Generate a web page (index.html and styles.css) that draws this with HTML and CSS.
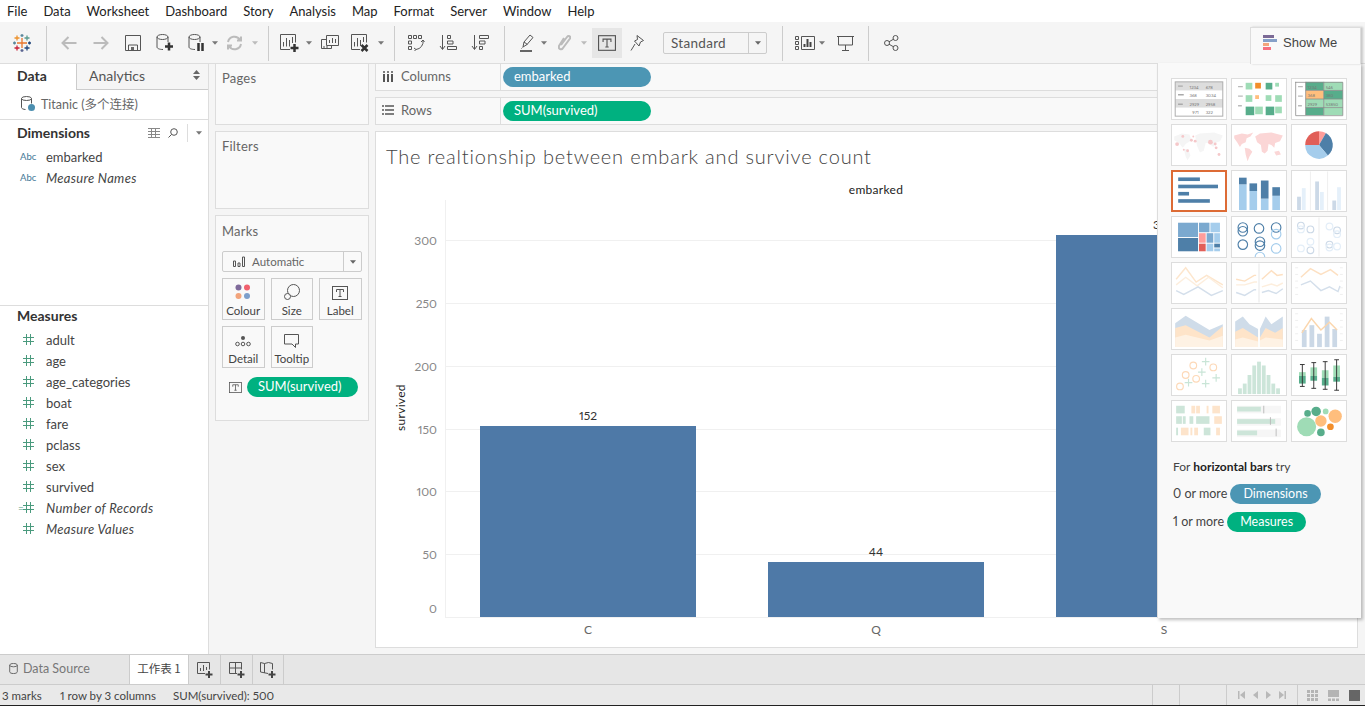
FILE: index.html
```html
<!DOCTYPE html>
<html>
<head>
	<meta charset="utf-8">
	<title>Tableau - Sheet 1</title>
	<link rel="stylesheet" href="styles.css">
</head>
<body>
<svg class="defs" width="0" height="0">
	<symbol id="caret" viewBox="0 0 10 6"><path d="M2 1.200h6L5 4.800z"/></symbol>
	<symbol id="tbox" viewBox="0 0 16 14"><rect x=".5" y=".5" width="15" height="13" fill="none" stroke="#555"/><path d="M4.500 6V3.500h7V6M8 3.500v7M6.500 10.500h3" fill="none" stroke="#555"/></symbol>
	<symbol id="hash" viewBox="0 0 11 11"><path d="M0 3.500h11M0 7.500h11M3.500 0v11M7.500 0v11" fill="none" stroke="#4a9a7d"/></symbol>
</svg>
<div class="app">

	<!-- menu -->
	<div class="menubar">
		<span>File</span><span>Data</span><span>Worksheet</span><span>Dashboard</span><span>Story</span><span>Analysis</span><span>Map</span><span>Format</span><span>Server</span><span>Window</span><span>Help</span>
	</div>

	<!-- toolbar -->
	<div class="toolbar">
		<div class="tb-group g1">
			<div class="btn"><svg width="18" height="18" viewBox="0 0 18 18" fill="none" stroke-width="1.300">
				<path d="M9 4v10M4 9h10" stroke="#e8762d"/><path d="M9 0v3M7.500 1.500h3" stroke="#5b879b"/><path d="M9 15v3M7.500 16.500h3" stroke="#5b6591"/><path d="M0 9h3M1.500 7.500v3" stroke="#59879b"/><path d="M15 9h3M16.500 7.500v3" stroke="#1f447a"/><path d="M4 1.500v5M1.500 4h5" stroke="#eb912b"/><path d="M14 1.500v5M11.500 4h5" stroke="#5a9a8f"/><path d="M4 11.500v5M1.500 14h5" stroke="#c72037"/><path d="M14 11.500v5M11.500 14h5" stroke="#1f457e"/>
			</svg></div>
		</div>
		<div class="tb-group g2">
			<div class="btn"><svg class="dim" width="16" height="14" viewBox="0 0 16 14"><path d="M15.500 7H1.500M7.500 1l-6 6 6 6"/></svg></div>
			<div class="btn"><svg class="dim" width="16" height="14" viewBox="0 0 16 14"><path d="M.5 7h14M8.500 1l6 6-6 6"/></svg></div>
			<div class="btn"><svg class="line" width="16" height="16" viewBox="0 0 16 16"><path d="M.5.5h15v15H.5zM3.500 15.500V10h9v5.500"/><rect x="6" y="12" width="3" height="3" fill="#666" stroke="none"/></svg></div>
			<div class="btn"><svg class="line" width="18" height="18" viewBox="0 0 18 18"><ellipse cx="6.500" cy="3" rx="5.500" ry="2.500"/><path d="M1 3v10c0 1.500 2.500 2.500 6 2.500M12 3v5"/><path class="heavy" d="M13 8.500v8M9 12.500h8"/></svg></div>
			<div class="btn"><svg class="line" width="18" height="18" viewBox="0 0 18 18"><ellipse cx="6.500" cy="3" rx="5.500" ry="2.500"/><path d="M1 3v10c0 1.500 2.500 2.500 6 2.500M12 3v5"/><path class="heavy" d="M10.500 9v8M14.500 9v8"/></svg></div>
			<svg class="caret nudge-3" width="10" height="6"><use href="#caret"/></svg>
			<div class="btn nudge-2"><svg class="dim" width="17" height="16" viewBox="0 0 17 16"><path d="M2 7a6.500 6.500 0 0 1 12-2M15 9a6.500 6.500 0 0 1-12 2M15 1.500V5.500h-4M2 14.500V10.500h4"/></svg></div>
			<svg class="caret off" width="10" height="6"><use href="#caret"/></svg>
		</div>
		<div class="tb-group g3">
			<div class="btn"><svg class="line" width="19" height="18" viewBox="0 0 19 18"><path d="M10 15.500H.5V.5h15v8"/><path d="M3.500 12.500V8M6.500 12.500V4M9.500 12.500V6M12.500 9V3" /><path class="heavy" d="M14.500 10v8M10.500 14h8"/></svg></div>
			<svg class="caret nudge-1" width="10" height="6"><use href="#caret"/></svg>
			<div class="btn"><svg class="line" width="18" height="16" viewBox="0 0 18 16"><path d="M5.500 4.500h-5v9h10v-3"/><path d="M5.500 10.500V.5h12v10z"/><path d="M8.500 8V5M11.500 8V3M14.500 8V4M3 13.500V11M6 13.500V11"/></svg></div>
			<div class="btn nudge-2"><svg class="line" width="18" height="18" viewBox="0 0 18 18"><path d="M9 15.500H.5V.5h15v8"/><path d="M3.500 12.500V8M6.500 12.500V4M9.500 12V6M12.500 8V3"/><path class="heavy" d="M10.500 11l6 6M16.500 11l-6 6"/></svg></div>
			<svg class="caret" width="10" height="6"><use href="#caret"/></svg>
		</div>
		<div class="tb-group g4">
			<div class="btn"><svg class="line" width="18" height="17" viewBox="0 0 18 17"><path d="M1.500 1.500h3v3h-3zM6.500 1.500h3v3h-3zM11.500 1.500h3v3h-3zM1.500 7h3v3h-3zM1.500 12.500h3v3h-3z"/><path d="M16 6a8 8 0 0 1-7 9.500M14 8l2-2 1.500 2M7 14l2 1.500L7.500 17"/></svg></div>
			<div class="btn"><svg class="line" width="18" height="17" viewBox="0 0 18 17"><path d="M3.500 1v14M1 12l2.500 3.500L6 12"/><path d="M8.500 1.500h3v3h-3zM8.500 7h5.500v3H8.500zM8.500 12.500h9v3h-9z"/></svg></div>
			<div class="btn"><svg class="line" width="18" height="17" viewBox="0 0 18 17"><path d="M3.500 1v14M1 12l2.500 3.500L6 12"/><path d="M8.500 1.500h9v3h-9zM8.500 7h5.500v3H8.500zM8.500 12.500h3v3h-3z"/></svg></div>
		</div>
		<div class="tb-group g5">
			<div class="btn"><svg class="line" width="14" height="18" viewBox="0 0 14 18"><path d="M3 13l1-5 6-7 3 2.500-6 7zM4 8l3.500 2.500M2.500 13.500l-1 1"/><rect y="16" width="12" height="2" fill="#666" stroke="none"/></svg></div>
			<svg class="caret nudge-4" width="10" height="6"><use href="#caret"/></svg>
			<div class="btn nudge-1"><svg class="dim" width="13" height="17" viewBox="0 0 13 17"><path d="M3 11l6-8c1.500-2 4-.5 3 1.500L5 14c-1.500 2.500-5 1-4-2l5-8"/></svg></div>
			<svg class="caret off nudge-1" width="10" height="6"><use href="#caret"/></svg>
			<div class="btn-on"><svg width="18" height="16"><use href="#tbox"/></svg></div>
			<div class="btn nudge-1"><svg class="line" width="14" height="16" viewBox="0 0 14 16"><path d="M7 .5l6.500 5-3 1.500-1.500 4-4.500-5 3-1.500zM5 9l-4 6.500"/></svg></div>
			<div class="combo"><span>Standard</span><b><svg width="10" height="6"><use href="#caret"/></svg></b></div>
		</div>
		<div class="tb-group g6">
			<div class="btn"><svg class="line" width="20" height="14" viewBox="0 0 20 14"><path d="M.5.5h3v3h-3zM.5 5.500h3v3h-3zM.5 10.500h3v3h-3zM6.500.5h13v13h-13z"/><path class="heavy-thin" d="M9.500 11V8M12.500 11V3M15.500 11V6"/></svg></div>
			<svg class="caret nudge-4" width="10" height="6"><use href="#caret"/></svg>
			<div class="btn nudge-p2"><svg class="line" width="17" height="16" viewBox="0 0 17 16"><path d="M0 1.500h17M1.500 1.500v8.500h14V1.500M8.500 10v5M5 15.500h7"/></svg></div>
		</div>
		<div class="tb-group g7">
			<div class="btn"><svg class="line" width="15" height="16" viewBox="0 0 15 16"><circle cx="11.500" cy="3" r="2.500"/><circle cx="11.500" cy="13" r="2.500"/><circle cx="3" cy="8" r="2.500"/><path d="M5 6.800l4.500-2.600M5 9.200l4.500 2.600"/></svg></div>
		</div>
	</div>

	<div class="workspace">

		<!-- data pane -->
		<div class="data-pane">
			<div class="pane-tabs">
				<div class="tab-data">Data</div>
				<div class="tab-analytics">Analytics<svg width="7" height="10" viewBox="0 0 7 10"><path d="M3.500 0L7 4H0zM3.500 10L0 6h7z" fill="#666"/></svg></div>
			</div>
			<div class="source">
				<svg class="line" width="14" height="15" viewBox="0 0 14 15"><ellipse cx="5.500" cy="2.500" rx="5" ry="2"/><path d="M.5 2.500v9c0 1 2 2 4 2M10.500 2.500v5"/><circle cx="10.500" cy="11.500" r="3.500" fill="#4c8fb0" stroke="none"/></svg>
				<span>Titanic (多个连接)</span>
			</div>
			<div class="dims">
				<div class="pane-head">
					<span>Dimensions</span>
					<svg class="line thin" width="12" height="10" viewBox="0 0 12 10"><path d="M0 .5h12M0 3.500h12M0 6.500h12M0 9.500h12M3.500 0v10M7.500 0v10"/></svg>
					<svg class="line" width="10" height="10" viewBox="0 0 10 10"><circle cx="6" cy="4" r="3.300"/><path d="M3.500 6.500L.5 9.500"/></svg>
					<i class="head-sep"></i>
					<svg class="caret" width="10" height="6"><use href="#caret"/></svg>
				</div>
				<div class="field"><em class="abc">Abc</em>embarked</div>
				<div class="field calc"><em class="abc">Abc</em>Measure Names</div>
			</div>
			<div class="measures">
				<div class="pane-head short"><span>Measures</span></div>
				<div class="field"><svg width="11" height="11"><use href="#hash"/></svg>adult</div>
				<div class="field"><svg width="11" height="11"><use href="#hash"/></svg>age</div>
				<div class="field"><svg width="11" height="11"><use href="#hash"/></svg>age_categories</div>
				<div class="field"><svg width="11" height="11"><use href="#hash"/></svg>boat</div>
				<div class="field"><svg width="11" height="11"><use href="#hash"/></svg>fare</div>
				<div class="field"><svg width="11" height="11"><use href="#hash"/></svg>pclass</div>
				<div class="field"><svg width="11" height="11"><use href="#hash"/></svg>sex</div>
				<div class="field"><svg width="11" height="11"><use href="#hash"/></svg>survived</div>
				<div class="field calc"><b class="eq">=</b><svg width="11" height="11"><use href="#hash"/></svg>Number of Records</div>
				<div class="field calc"><svg width="11" height="11"><use href="#hash"/></svg>Measure Values</div>
			</div>
		</div>

		<!-- cards -->
		<div class="cards">
			<div class="card pages">Pages</div>
			<div class="card filters">Filters</div>
			<div class="card marks">
				Marks
				<div class="mark-type">
					<svg class="line" width="12" height="11" viewBox="0 0 12 11"><path d="M.5 5h2v5.500h-2zM5 7h2v3.500H5zM9.500 1h2v9.500h-2z"/></svg>
					<span>Automatic</span>
					<b><svg width="10" height="6"><use href="#caret"/></svg></b>
				</div>
				<div class="mark-btns">
					<div class="mark-btn"><svg width="16" height="16" viewBox="0 0 16 16"><circle cx="3.500" cy="3.500" r="3" fill="#7f6a9a"/><circle cx="12" cy="3.500" r="3" fill="#f0606e"/><circle cx="3.500" cy="12" r="3" fill="#f2a47c"/><circle cx="12" cy="12" r="3" fill="#7d9fcb"/></svg>Colour</div>
					<div class="mark-btn"><svg class="line" width="16" height="16" viewBox="0 0 16 16"><circle cx="9.500" cy="6.500" r="6"/><circle cx="3.500" cy="12.500" r="3" fill="#f9f9f9"/></svg>Size</div>
					<div class="mark-btn"><svg width="16" height="14"><use href="#tbox"/></svg>Label</div>
					<div class="mark-btn"><svg class="line" width="16" height="14" viewBox="0 0 16 14"><circle cx="8" cy="4" r="2" fill="#555" stroke="none"/><circle cx="2.500" cy="10" r="1.800"/><circle cx="8" cy="10" r="1.800"/><circle cx="13.500" cy="10" r="1.800"/></svg>Detail</div>
					<div class="mark-btn"><svg class="line" width="16" height="14" viewBox="0 0 16 14"><path d="M.5.5h14v9.500h-3v3.500L8 10H.5z"/></svg>Tooltip</div>
				</div>
				<div class="mark-pill">
					<svg width="13" height="11"><use href="#tbox"/></svg>
					<div class="pill green wide">SUM(survived)</div>
				</div>
			</div>
		</div>

		<!-- shelves and chart -->
		<div class="sheet">
			<div class="shelf first">
				<div class="shelf-name"><svg width="12" height="11" viewBox="0 0 12 11"><path d="M2 3v8M6 3v8M10 3v8" stroke="#555" stroke-width="2" fill="none"/><path d="M1 1h2M5 1h2M9 1h2" stroke="#555" stroke-width="1.500"/></svg>Columns</div>
				<div class="pill blue">embarked</div>
			</div>
			<div class="shelf">
				<div class="shelf-name"><svg width="12" height="10" viewBox="0 0 12 10"><path d="M0 1h2M3 1h9M0 5h2M3 5h9M0 9h2M3 9h9" stroke="#555" stroke-width="1.500" fill="none"/></svg>Rows</div>
				<div class="pill green">SUM(survived)</div>
			</div>
			<div class="viz">
				<h1>The realtionship between embark and survive count</h1>
				<svg class="chart" width="981" height="474" viewBox="376 172 981 474">
					<text class="head" x="876" y="194">embarked</text>
					<path class="grid" d="M445 240.500H1357M445 303.500H1357M445 366.500H1357M445 429.500H1357M445 491.500H1357M445 554.500H1357M445 617.500H1357M445.500 200V617"/>
					<text class="axis-t" transform="translate(405 431) rotate(-90)">survived</text>
					<g class="tick">
						<text x="437" y="245">300</text><text x="437" y="308">250</text><text x="437" y="371">200</text><text x="437" y="434">150</text><text x="437" y="496">100</text><text x="437" y="559">50</text><text x="437" y="613">0</text>
					</g>
					<rect class="bar" x="480" y="426" width="216" height="191"/>
					<rect class="bar" x="768" y="562" width="216" height="55"/>
					<rect class="bar" x="1056" y="235" width="216" height="382"/>
					<g class="val">
						<text x="588" y="420">152</text><text x="876" y="556">44</text><text x="1164" y="229">304</text>
					</g>
					<g class="cat">
						<text x="588" y="634">C</text><text x="876" y="634">Q</text><text x="1164" y="634">S</text>
					</g>
				</svg>
			</div>
		</div>
	</div>

	<!-- sheet tabs -->
	<div class="tabs">
		<div class="tab-source"><svg class="line" width="9" height="11" viewBox="0 0 10 13"><ellipse cx="5" cy="2.500" rx="4.500" ry="2"/><path d="M.5 2.500v8c0 1 2 2 4.500 2s4.500-1 4.500-2v-8"/></svg>Data Source</div>
		<div class="tab-sheet">工作表 1</div>
		<div class="tab-add"><svg class="line" width="16" height="16" viewBox="0 0 16 16"><path d="M8 11.500H.5V.5h12v7"/><path d="M3.500 9V6M6.500 9V3M9.500 8V5"/><path class="heavy-thin" d="M12 9v7M8.500 12.500h7"/></svg></div>
		<div class="tab-add"><svg class="line" width="16" height="16" viewBox="0 0 16 16"><path d="M8 11.500H.5V.5h12v7M.5 6h12M6.500.5v11"/><path class="heavy-thin" d="M12 9v7M8.500 12.500h7"/></svg></div>
		<div class="tab-add"><svg class="line" width="16" height="16" viewBox="0 0 16 16"><path d="M8 11.500L.5 10V.5l4 1 4-1 4 1v6M4.500 1.500v9.500"/><path class="heavy-thin" d="M12 9v7M8.500 12.500h7"/></svg></div>
	</div>

	<!-- status -->
	<div class="status">
		<span class="st-marks">3 marks</span>
		<span class="st-size">1 row by 3 columns</span>
		<span>SUM(survived): 500</span>
		<div class="st-right">
			<i class="st-cell a"></i>
			<i class="st-cell b"></i>
			<div class="st-cell nav">
				<svg width="7" height="8" viewBox="0 0 7 8"><path d="M0 0h1.500v8H0zM7 0v8L2 4z"/></svg>
				<svg width="5" height="8" viewBox="0 0 5 8"><path d="M5 0v8L0 4z"/></svg>
				<svg width="5" height="8" viewBox="0 0 5 8"><path d="M0 0v8l5-4z"/></svg>
				<svg width="7" height="8" viewBox="0 0 7 8"><path d="M5.500 0H7v8H5.500zM0 0v8l5-4z"/></svg>
			</div>
			<div class="st-cell views">
				<svg width="11" height="11" viewBox="0 0 11 11" fill="#b4b4b4"><path d="M0 0h3v3H0zM4 0h3v3H4zM8 0h3v3H8zM0 4h3v3H0zM4 4h3v3H4zM8 4h3v3H8zM0 8h3v3H0zM4 8h3v3H4zM8 8h3v3H8z"/></svg>
				<svg width="11" height="11" viewBox="0 0 11 11" fill="#b4b4b4"><path d="M0 0h11v7H0zM0 8.500h3V11H0zM4 8.500h3V11H4zM8 8.500h3V11H8z"/></svg>
				<svg width="11" height="11" viewBox="0 0 11 11" fill="#666"><path d="M0 0h11v11H0z"/></svg>
			</div>
		</div>
	</div>

	<!-- show me panel -->
	<div class="showme">
		<div class="showme-tab">
			<svg width="14" height="15" viewBox="0 0 14 15"><rect width="11" height="3" fill="#7c6a96"/><rect y="4" width="14" height="3" fill="#86a0c8"/><rect y="8" width="6" height="3" fill="#f2a57c"/><rect y="12" width="8" height="3" fill="#f6707f"/></svg>
			Show Me
		</div>
		<div class="showme-body">
			<div class="thumbs">
				<!-- text table -->
				<svg class="thumb" viewBox="0 0 56 42"><rect x="3" y="3" width="50" height="9" fill="#ddd"/><rect x="3" y="21" width="50" height="9" fill="#ddd"/><rect x="3" y="3" width="50" height="36" fill="none" stroke="#aaa"/><path d="M6 7.500h5M6 16.500h6M6 26.500h5" stroke="#aaa" stroke-width="1.500"/><g class="mini"><text x="18" y="10">1234</text><text x="35" y="10">678</text><text x="18" y="19">368</text><text x="35" y="19">3034</text><text x="18" y="28">2929</text><text x="35" y="28">2958</text><text x="21" y="37">971</text><text x="35" y="37">322</text></g></svg>
				<!-- heat map -->
				<svg class="thumb" viewBox="0 0 56 42"><path d="M6 8h5M6 18h5M6 28h4" stroke="#bbb" stroke-width="1.500"/><g fill="#9fdcb6"><rect x="14" y="4" width="7" height="7"/><rect x="45" y="4" width="4" height="4"/><rect x="14" y="17" width="7" height="7"/><rect x="35" y="17" width="6" height="6"/><rect x="45" y="17" width="7" height="7"/><rect x="24" y="29" width="8" height="8"/><rect x="45" y="29" width="7" height="7"/></g><g fill="#57ad8b"><rect x="35" y="4" width="7" height="7"/><rect x="14" y="29" width="9" height="9"/><rect x="35" y="29" width="9" height="9"/></g><rect x="24" y="4" width="6" height="6" fill="#f28e2b"/><rect x="24" y="17" width="4" height="4" fill="#ffbe7d"/></svg>
				<!-- highlight table -->
				<svg class="thumb" viewBox="0 0 56 42"><rect x="14" y="3" width="19" height="9" fill="#57ad8b"/><rect x="33" y="3" width="20" height="9" fill="#9fdcb6"/><rect x="14" y="12" width="19" height="9" fill="#ffbe7d"/><rect x="33" y="12" width="20" height="9" fill="#57ad8b"/><rect x="14" y="21" width="19" height="9" fill="#9fdcb6"/><rect x="33" y="21" width="20" height="9" fill="#9fdcb6"/><rect x="14" y="30" width="19" height="8" fill="#57ad8b"/><rect x="33" y="30" width="20" height="8" fill="#9fdcb6"/><path d="M3 3.500h50v35H3.500V3M14 3v35M33 3v35M14 12h39M14 21h39M14 30h39" fill="none" stroke="#8a8a8a" stroke-width=".8"/><path d="M6 8h5M6 18h5M6 28h4" stroke="#bbb" stroke-width="1.500"/><g class="mini"><text x="16" y="10">1234</text><text x="35" y="10">546</text><text x="16" y="19">368</text><text x="35" y="19">380</text><text x="16" y="28">2929</text><text x="35" y="28">53850</text></g></svg>
				<!-- symbol map -->
				<svg class="thumb" viewBox="0 0 56 42"><path d="M2 12l8-3 8 1 2 6-6 4-3 4-4-5-5-3zM12 25l5 1 2 6-3 5-2-4zM24 11l5-2 15-1 9 3-3 6-5 2-2 4-5-4-3 0-2 8-4 2-3-7-1-5z" fill="#f5f5f5"/><g fill="#f5c8ca"><circle cx="5" cy="20" r="2"/><circle cx="11" cy="12" r="1.500"/><circle cx="20" cy="16" r="1.500"/><circle cx="24" cy="17" r="1.500"/><circle cx="40" cy="18" r="2.500"/><circle cx="45" cy="20" r="1.500"/><circle cx="46" cy="24" r="1.500"/><circle cx="12" cy="26" r="1"/><circle cx="16" cy="27" r="1.500"/><circle cx="49" cy="31" r="1.500"/><circle cx="22" cy="12" r="1"/></g></svg>
				<!-- filled map -->
				<svg class="thumb" viewBox="0 0 56 42"><path d="M2 11l8-2 6 1 6-2-3 4-4 2-1 4-4 2-2 3-3-5-3-4zM13 24l5 1 3 3-3 5-2 5-2-7zM24 12l5-3 12-1 12 3-3 6-5 2-1 5-3-3-3-1-1 7-3 3-3-2-1-7-4-3zM44 28l5-1 2 4-5 1z" fill="#fbd6d6"/></svg>
				<!-- pie -->
				<svg class="thumb" viewBox="0 0 56 42"><path d="M28 21V6.500a14.500 14.500 0 0 1 7.250 1.940z" fill="#ff9d9a"/><path d="M28 21l7.250-12.560A14.500 14.500 0 0 1 37.300 32.100z" fill="#4e7fa8"/><path d="M28 21l9.300 11.100A14.500 14.500 0 0 1 13.500 21z" fill="#a5cdec"/><path d="M28 21H13.500A14.500 14.500 0 0 1 28 6.500z" fill="#e15f58"/></svg>
				<!-- horizontal bars, selected -->
				<svg class="thumb picked" viewBox="0 0 56 42"><g fill="#4e7fa8"><rect x="5" y="6" width="24" height="4"/><rect x="5" y="14" width="44" height="4"/><rect x="5" y="22" width="12" height="4"/><rect x="5" y="30" width="35" height="4"/></g></svg>
				<!-- stacked bars -->
				<svg class="thumb" viewBox="0 0 56 42"><g fill="#a5cdec"><rect x="7" y="14" width="8" height="27"/><rect x="18" y="21" width="8" height="20"/><rect x="30" y="29" width="8" height="12"/><rect x="42" y="26" width="8" height="15"/></g><g fill="#4e7fa8"><rect x="7" y="7" width="8" height="7"/><rect x="18" y="13" width="8" height="8"/><rect x="30" y="10" width="8" height="19"/><rect x="42" y="17" width="8" height="9"/></g></svg>
				<!-- side by side bars -->
				<svg class="thumb" viewBox="0 0 56 42"><path d="M19 .5v41M37 .5v41" stroke="#eee"/><g fill="#ccd9e7"><rect x="5" y="27" width="4" height="14"/><rect x="24" y="11" width="4" height="30"/><rect x="42" y="31" width="4" height="10"/></g><g fill="#e5f0fa"><rect x="10" y="18" width="4" height="23"/><rect x="29" y="22" width="4" height="19"/><rect x="47" y="17" width="4" height="24"/></g></svg>
				<!-- treemap -->
				<svg class="thumb" viewBox="0 0 56 42"><g fill="#7ba9cf"><rect x="6" y="6" width="21" height="15"/><rect x="28" y="6" width="11" height="10"/><rect x="36" y="17" width="7" height="10"/></g><g fill="#a5cdec"><rect x="40" y="6" width="10" height="10"/><rect x="44" y="17" width="6" height="10"/><rect x="36" y="28" width="7" height="8"/><rect x="44" y="33" width="6" height="3"/></g><g fill="#4e7fa8"><rect x="6" y="22" width="21" height="14"/><rect x="44" y="28" width="6" height="4"/></g><rect x="28" y="17" width="7" height="10" fill="#ff9d9a"/><rect x="28" y="28" width="7" height="8" fill="#e15f58"/></svg>
				<!-- circle view -->
				<svg class="thumb" viewBox="0 0 56 42" fill="none" stroke-width="1.200"><g stroke="#4e7fa8"><circle cx="11" cy="11" r="5"/><circle cx="11" cy="15" r="5"/><circle cx="28" cy="12" r="5"/><circle cx="46" cy="11" r="5"/><circle cx="11" cy="29" r="5"/><circle cx="29" cy="26" r="5"/><circle cx="29" cy="30" r="5"/></g><g stroke="#a5cdec"><circle cx="46" cy="18" r="5"/><circle cx="46" cy="33" r="5"/><circle cx="29" cy="42" r="5"/></g></svg>
				<!-- side by side circles -->
				<svg class="thumb" viewBox="0 0 56 42" fill="none" stroke-width="1.200"><path d="M28 .5v41" stroke="#eee"/><g stroke="#ccd9e7"><circle cx="9" cy="9" r="3.500"/><circle cx="19" cy="13" r="3.500"/><circle cx="19" cy="35" r="3.500"/><circle cx="47" cy="14" r="3.500"/><circle cx="39" cy="29" r="3.500"/></g><g stroke="#e3eef8"><circle cx="9" cy="13" r="3.500"/><circle cx="19" cy="26" r="3.500"/><circle cx="9" cy="33" r="3.500"/><circle cx="39" cy="10" r="3.500"/><circle cx="39" cy="32" r="3.500"/><circle cx="47" cy="31" r="3.500"/><circle cx="47" cy="18" r="3.500"/></g></svg>
				<!-- lines continuous -->
				<svg class="thumb" viewBox="0 0 56 42" fill="none" stroke-width="1.500"><path d="M4 17l10-12 11 15 11-7 17 10" stroke="#fde6cd"/><path d="M4 23l10-8 12 9 12-9 15 11" stroke="#fdeedd"/><path d="M4 29l8 4 15-8 14 9 12-5" stroke="#d4dfeb"/></svg>
				<!-- lines discrete -->
				<svg class="thumb" viewBox="0 0 56 42" fill="none" stroke-width="1.500"><path d="M28 .5v41" stroke="#eee"/><path d="M4 17l9 2 10-6h2M31 17l10-9 6 5 6-1" stroke="#fde0c2"/><path d="M4 23l9 0 10-3 3 0M31 25l10-3 6 2 6-3" stroke="#fdeedd"/><path d="M4 31l9 3 10-6h2M31 31l7-2 8 3 7-5" stroke="#d4dfeb"/></svg>
				<!-- dual lines -->
				<svg class="thumb" viewBox="0 0 56 42" fill="none" stroke-width="1.500"><path d="M3 5h3M3 12h3M3 19h3M3 26h3M3 33h3M50 5h3M50 12h3M50 19h3M50 26h3M50 33h3" stroke="#eee" stroke-width="1"/><path d="M9 15l10-9 11 6 10-5 8 6" stroke="#fde0c2"/><path d="M9 23l10-4 11 10 9-4 9 5 2-6" stroke="#d4dfeb"/></svg>
				<!-- area continuous -->
				<svg class="thumb" viewBox="0 0 56 42"><path d="M3 15L14 7l25 15 14-6v24H3z" fill="#cfdce9"/><path d="M3 20l11-3 25 13 14-12v22H3z" fill="#fee4c9"/><path d="M3 30l11-3 25 6 14-5v12H3z" fill="#fef2e4"/></svg>
				<!-- area discrete -->
				<svg class="thumb" viewBox="0 0 56 42"><path d="M3 13l8-5 7 8 9 5V40H3z" fill="#cfdce9"/><path d="M29 21l6-13 6 8 12-8v32H29z" fill="#cfdce9"/><path d="M3 24l8-4 16 10v10H3z" fill="#fee4c9"/><path d="M29 30l6-10 10 5 8-5v20H29z" fill="#fee4c9"/><path d="M3 32l8-2 16 4v6H3zM29 33l6-3 18 2v8H29z" fill="#fef2e4"/></svg>
				<!-- dual combination -->
				<svg class="thumb" viewBox="0 0 56 42"><path d="M3 5h3M3 12h3M3 19h3M3 26h3M3 33h3M50 5h3M50 12h3M50 19h3M50 26h3M50 33h3" stroke="#eee"/><g fill="#cbd8e6"><rect x="10" y="22" width="5" height="18"/><rect x="18" y="17" width="5" height="23"/><rect x="26" y="26" width="5" height="14"/><rect x="34" y="8" width="5" height="32"/><rect x="42" y="21" width="5" height="19"/></g><path d="M10 25l10-15 10 12 9-8 8 8" fill="none" stroke="#fbd6ad" stroke-width="1.500"/></svg>
				<!-- scatter -->
				<svg class="thumb" viewBox="0 0 56 42" fill="none" stroke-width="1.200"><g stroke="#fdd9b8"><circle cx="22" cy="11" r="3.500"/><circle cx="43" cy="13" r="3.500"/><circle cx="14" cy="21" r="3.500"/><circle cx="25" cy="25" r="3.500"/><circle cx="8" cy="33" r="3.500"/></g><path d="M35 3v8M31 7h8M31 14v8M27 18h8M17 25v8M13 29h8M35 26v8M31 30h8M46 20v8M42 24h8" stroke="#c9e5d7"/></svg>
				<!-- histogram -->
				<svg class="thumb" viewBox="0 0 56 42"><g fill="#cce5d9"><rect x="6" y="35" width="4" height="6"/><rect x="11" y="30" width="4" height="11"/><rect x="16" y="21" width="4" height="20"/><rect x="21" y="11" width="4" height="30"/><rect x="26" y="7" width="4" height="34"/><rect x="31" y="11" width="4" height="30"/><rect x="36" y="21" width="4" height="20"/><rect x="41" y="30" width="4" height="11"/><rect x="46" y="35" width="4" height="6"/></g></svg>
				<!-- box plot -->
				<svg class="thumb" viewBox="0 0 56 42"><g fill="#9fdcb6"><rect x="7" y="18" width="7" height="4"/><rect x="19" y="13" width="7" height="9"/><rect x="31" y="16" width="7" height="8"/><rect x="43" y="11" width="7" height="12"/></g><g fill="#57ad8b"><rect x="7" y="22" width="7" height="8"/><rect x="19" y="22" width="7" height="5"/><rect x="31" y="24" width="7" height="8"/><rect x="43" y="23" width="7" height="5"/></g><path d="M10.500 10v23M8 10h5M8 33h5M22.500 8v27M20 8h5M20 35h5M34.500 7v29M32 7h5M32 36h5M46.500 5v32M44 5h5M44 37h5" stroke="#333" fill="none"/></svg>
				<!-- gantt -->
				<svg class="thumb" viewBox="0 0 56 42"><g fill="#cde5d9"><rect x="4" y="5" width="9" height="8"/><rect x="4" y="16" width="6" height="8"/><rect x="11" y="16" width="3" height="8"/><rect x="18" y="16" width="4" height="8"/><rect x="25" y="16" width="14" height="8"/><rect x="4" y="28" width="2" height="8"/><rect x="33" y="28" width="7" height="8"/></g><g fill="#fde4cb"><rect x="20" y="5" width="4" height="8"/><rect x="25" y="5" width="4" height="8"/><rect x="36" y="5" width="2" height="8"/><rect x="42" y="5" width="8" height="8"/><rect x="44" y="16" width="8" height="8"/><rect x="9" y="28" width="8" height="8"/><rect x="19" y="28" width="2" height="8"/><rect x="23" y="28" width="4" height="8"/><rect x="46" y="28" width="4" height="8"/></g></svg>
				<!-- bullet -->
				<svg class="thumb" viewBox="0 0 56 42"><g fill="#f6f6f6"><rect x="5" y="5" width="46" height="8"/><rect x="5" y="18" width="46" height="8"/><rect x="5" y="30" width="46" height="8"/></g><g fill="#cde5d9"><rect x="5" y="6" width="25" height="5"/><rect x="5" y="19" width="40" height="5"/><rect x="5" y="31" width="21" height="5"/></g><path d="M33 5v8M40 17v8M46 29v8" stroke="#bbb"/></svg>
				<!-- packed bubbles -->
				<svg class="thumb" viewBox="0 0 56 42"><circle cx="15" cy="27" r="10" fill="#9fdcb6"/><circle cx="30" cy="21" r="6" fill="#ffbe7d"/><circle cx="45" cy="16" r="7" fill="#ffbe7d"/><circle cx="25" cy="11" r="5" fill="#57ad8b"/><circle cx="16" cy="13" r="3.500" fill="#57ad8b"/><circle cx="35" cy="11" r="3" fill="#9fdcb6"/><circle cx="40" cy="27" r="3.500" fill="#f28e2b"/><circle cx="30" cy="33" r="4" fill="#57ad8b"/></svg>
			</div>
			<div class="hint">
				<p>For <b>horizontal bars</b> try</p>
				<p class="need">0 or more <span class="pill blue small">Dimensions</span></p>
				<p class="need">1 or more <span class="pill green small">Measures</span></p>
			</div>
		</div>
	</div>

</div>
</body>
</html>
```

FILE: styles.css
```css
html *{
	box-sizing: border-box;
}
body{
	margin: 0;
	font-family: Lato, "Noto Sans CJK SC", sans-serif;
	font-size: 13px;
	font-variant-numeric: proportional-nums;
	color: #333;
	background: #f5f5f5;
}
.defs{
	position: absolute;
}
.app{
	position: relative;
	width: 1365px;
	height: 706px;
	overflow: hidden;
	display: flex;
	flex-direction: column;
}
svg{
	display: block;
	flex: none;
}

/* shared icon strokes */
.line, .dim{
	fill: none;
	stroke: #555;
}
.dim{
	stroke: #bbb;
	stroke-width: 2;
}
.line.thin{
	stroke: #888;
}
.heavy{
	stroke: #333;
	stroke-width: 2.5;
}
.heavy-thin{
	stroke: #444;
	stroke-width: 2;
}
.caret{
	fill: #777;
}
.caret.off{
	fill: #bbb;
}

/* menu */
.menubar{
	height: 22px;
	flex: none;
	background: #fff;
	display: flex;
	align-items: center;
	gap: 16px;
	padding-left: 7px;
	color: #222;
}

/* toolbar */
.toolbar{
	height: 42px;
	flex: none;
	display: flex;
	background: #f5f5f5;
	border-bottom: 1px solid #ddd;
}
.tb-group{
	display: flex;
	align-items: center;
	height: 35px;
	margin-top: 4px;
	padding-bottom: 2px;
	border-right: 1px solid #ccc;
}
.g1{ width: 47px; padding-left: 6px; }
.g2{ width: 222px; padding-left: 6px; }
.g3{ width: 126px; padding-left: 4px; }
.g4{ width: 110px; padding-left: 5px; }
.g5{ width: 278px; padding-left: 6px; }
.g6{ width: 86px; padding-left: 6px; }
.g7{ border-right: 0; padding-left: 6px; }
.btn{
	width: 32px;
	height: 32px;
	display: flex;
	align-items: center;
	justify-content: center;
	flex: none;
}
.nudge-1{ margin-left: -1px; }
.nudge-2{ margin-left: -2px; }
.nudge-3{ margin-left: -3px; }
.nudge-4{ margin-left: -4px; }
.nudge-p2{ margin-left: 2px; }
.btn-on{
	width: 30px;
	height: 30px;
	margin-left: 3px;
	background: #e6e6e6;
	display: flex;
	align-items: center;
	justify-content: center;
}
.combo{
	width: 104px;
	height: 22px;
	margin-left: 10px;
	display: flex;
	align-items: center;
	border: 1px solid #ccc;
	border-radius: 2px;
	color: #555;
	font-size: 13.500px;
	padding-left: 7px;
	letter-spacing: .3px;
}
.combo span{
	flex: 1;
}
.combo b{
	width: 18px;
	height: 100%;
	border-left: 1px solid #ccc;
	display: flex;
	align-items: center;
	justify-content: center;
	fill: #666;
}

/* main area */
.workspace{
	height: 590px;
	flex: none;
	display: flex;
}
.data-pane{
	width: 209px;
	background: #fff;
	border-right: 1px solid #ddd;
	flex: none;
}
.pane-tabs{
	height: 26px;
	display: flex;
	font-size: 14px;
}
.tab-data{
	width: 77px;
	padding: 3px 0 0 17px;
	font-weight: 700;
	color: #333;
	border-right: 1px solid #ccc;
}
.tab-analytics{
	flex: 1;
	padding: 3px 8px 0 12px;
	display: flex;
	justify-content: space-between;
	color: #555;
	background: #f5f5f5;
	border-bottom: 1px solid #ccc;
}
.tab-analytics svg{
	margin-top: 3px;
}
.source{
	height: 30px;
	display: flex;
	align-items: center;
	gap: 6px;
	padding: 0 0 2px 21px;
	color: #666;
	font-size: 12.500px;
	border-bottom: 1px solid #ddd;
}
.dims{
	height: 186px;
	border-bottom: 1px solid #ddd;
}
.pane-head{
	height: 27px;
	display: flex;
	align-items: center;
	padding: 0 0 2px 17px;
	font-size: 14px;
	font-weight: 700;
	color: #333;
}
.pane-head span{
	width: 131px;
}
.pane-head .line + .line{
	margin-left: 8px;
}
.pane-head .caret{
	margin-left: 6px;
}
.head-sep{
	width: 1px;
	height: 18px;
	margin-left: 9px;
	background: #ddd;
}
.pane-head.short{
	height: 21px;
}
.measures{
	display: flex;
	flex-direction: column;
}
.measures .pane-head{
	margin-bottom: 3px;
}
.field{
	height: 21px;
	display: flex;
	align-items: center;
	padding: 0 0 2px 23px;
	color: #444;
	position: relative;
}
.field svg{
	margin-right: 12px;
}
.field.calc{
	font-style: italic;
	letter-spacing: .3px;
}
.abc{
	width: 26px;
	margin-left: -3px;
	font-style: normal;
	font-size: 9.500px;
	letter-spacing: 0;
	color: #3f7796;
}
.eq{
	position: absolute;
	left: 18px;
	font-style: normal;
	font-weight: 400;
	font-size: 10px;
	color: #4a9a7d;
}

/* cards */
.cards{
	width: 166px;
	flex: none;
	padding: 0 6px;
	display: flex;
	flex-direction: column;
	gap: 6px;
}
.card{
	background: #f9f9f9;
	border: 1px solid #ddd;
	padding: 7px 6px;
	color: #666;
	letter-spacing: .2px;
}
.pages{
	height: 61px;
	border-top: 0;
	padding-top: 6px;
}
.filters{
	height: 78px;
	padding-top: 6px;
}
.marks{
	height: 206px;
}
.mark-type{
	height: 21px;
	width: 140px;
	margin-top: 12px;
	display: flex;
	align-items: center;
	border: 1px solid #ccc;
	border-radius: 2px;
	padding-left: 10px;
	font-size: 11.500px;
	letter-spacing: 0;
}
.mark-type span{
	flex: 1;
	margin-left: 7px;
}
.mark-type b{
	width: 18px;
	height: 100%;
	border-left: 1px solid #ccc;
	display: flex;
	align-items: center;
	justify-content: center;
	fill: #666;
}
.mark-btns{
	margin-top: 6px;
	display: grid;
	grid-template-columns: repeat(3, 42.500px);
	grid-auto-rows: 42px;
	gap: 6px;
}
.mark-btn{
	border: 1px solid #ccc;
	display: flex;
	flex-direction: column;
	align-items: center;
	justify-content: flex-end;
	gap: 4px;
	padding-bottom: 2px;
	font-size: 11.500px;
	letter-spacing: 0;
	color: #444;
}
.mark-pill{
	margin-top: 9px;
	padding-left: 7px;
	display: flex;
	align-items: center;
	gap: 5px;
}

/* pills */
.pill{
	width: 148px;
	height: 20px;
	border-radius: 10px;
	color: #fff;
	line-height: 19px;
	padding-left: 11px;
	letter-spacing: 0;
}
.pill.wide{
	width: 111px;
}
.blue{
	background: #4c96b4;
}
.green{
	background: #00b180;
}
.pill.small{
	display: inline-block;
	width: auto;
	padding: 0 13px;
}

/* shelves */
.sheet{
	width: 983px;
	flex: none;
}
.shelf{
	height: 28px;
	display: flex;
	align-items: center;
	background: #f9f9f9;
	border: 1px solid #ddd;
	border-right: 0;
	margin-bottom: 6px;
}
.shelf.first{
	height: 27px;
	border-top: 0;
}
.shelf-name{
	width: 125px;
	height: 100%;
	display: flex;
	align-items: center;
	gap: 7px;
	padding: 0 0 2px 6px;
	color: #666;
	border-right: 1px solid #ddd;
	margin-right: 2px;
}

/* chart */
.viz{
	height: 517px;
	background: #fff;
	border: 1px solid #ddd;
}
.viz h1{
	margin: 0;
	height: 40px;
	padding: 10px 0 0 10px;
	font-size: 20px;
	line-height: 28px;
	font-weight: 300;
	color: #444;
	letter-spacing: .81px;
}
.chart text{
	font-family: Lato, sans-serif;
}
.grid{
	stroke: #f0f0f0;
	fill: none;
}
.bar{
	fill: #4e79a7;
}
.head{
	font-size: 12px;
	fill: #222;
	letter-spacing: .3px;
	text-anchor: middle;
}
.axis-t{
	font-size: 12px;
	fill: #222;
	letter-spacing: .3px;
}
.tick text{
	font-size: 12px;
	fill: #888;
	text-anchor: end;
}
.val text{
	font-size: 12px;
	fill: #333;
	text-anchor: middle;
}
.cat text{
	font-size: 12px;
	fill: #666;
	text-anchor: middle;
}

/* tabs along the bottom */
.tabs{
	height: 30px;
	flex: none;
	display: flex;
	background: #e6e6e6;
	border-top: 1px solid #ccc;
}
.tab-source{
	width: 130px;
	display: flex;
	align-items: center;
	gap: 5px;
	padding: 0 0 2px 9px;
	font-size: 12.500px;
	color: #777;
	border-right: 1px solid #ccc;
}
.tab-sheet{
	width: 58px;
	background: #fff;
	text-align: center;
	line-height: 26px;
	font-family: "Noto Sans CJK SC", sans-serif;
	font-size: 11.500px;
	color: #444;
}
.tab-add{
	width: 32px;
	border-left: 1px solid #ccc;
	display: flex;
	align-items: center;
	justify-content: center;
}
.tab-add:last-child{
	border-right: 1px solid #ccc;
}

/* status bar */
.status{
	height: 22px;
	flex: none;
	display: flex;
	align-items: center;
	background: #e9e9e9;
	border-top: 1px solid #ccc;
	border-bottom: 1px solid #222;
	font-size: 11.500px;
	color: #444;
	padding-left: 2px;
}
.st-marks{
	width: 58px;
}
.st-size{
	width: 113px;
}
.st-right{
	margin-left: auto;
	height: 100%;
	display: flex;
}
.st-cell{
	border-left: 1px solid #ccc;
	display: flex;
	align-items: center;
}
.st-cell.a{
	width: 27px;
}
.st-cell.b{
	width: 47px;
}
.st-cell.nav{
	width: 71px;
	justify-content: space-around;
	padding: 0 7px;
	fill: #b8b8b8;
}
.st-cell.views{
	width: 68px;
	gap: 10px;
	padding-left: 9px;
}

/* show me */
.showme{
	position: absolute;
	left: 1157px;
	top: 27px;
	width: 204px;
	z-index: 5;
}
.showme-tab{
	width: 111px;
	height: 37px;
	margin-left: 93px;
	margin-bottom: -1px;
	position: relative;
	display: flex;
	align-items: center;
	gap: 6px;
	padding: 0 0 8px 12px;
	background: #f9f9f9;
	border: 1px solid #ddd;
	border-bottom: 0;
	box-shadow: 2px 0 2px rgba(0,0,0,.18);
	font-family: "Liberation Sans", sans-serif;
	font-size: 13px;
	color: #444;
}
.showme-body{
	height: 555px;
	padding: 15px 13px;
	background: #f9f9f9;
	border-left: 1px solid #ddd;
	box-shadow: 2px 2px 3px rgba(0,0,0,.25);
}
.thumbs{
	display: grid;
	grid-template-columns: repeat(3, 56px);
	grid-auto-rows: 42px;
	gap: 4px;
}
.thumb{
	width: 56px;
	height: 42px;
	background: #fff;
	border: 1px solid #ddd;
}
.thumb.picked{
	border: 2px solid #dd6b35;
}
.mini text{
	font-family: Lato, sans-serif;
	font-size: 4.500px;
	fill: #777;
}
.hint{
	margin-top: 15px;
	padding-left: 2px;
	font-size: 12px;
	color: #444;
}
.hint p{
	margin: 0 0 8px;
	line-height: 20px;
}
.hint p:first-child{
	margin-bottom: 7px;
}
.hint b{
	color: #222;
}
.hint .need{
	font-size: 12.500px;
}
.hint .pill{
	font-size: 12.500px;
}
```
